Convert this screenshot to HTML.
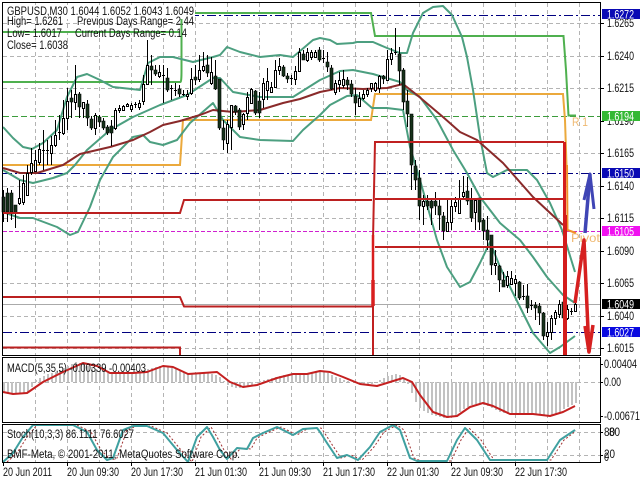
<!DOCTYPE html>
<html><head><meta charset="utf-8"><style>
html,body{margin:0;padding:0;background:#fff;width:640px;height:480px;overflow:hidden}
svg{display:block}
text{font-family:"Liberation Sans",sans-serif;font-size:11.5px;fill:#111}
.g{fill:none;stroke:#b4b4b4;stroke-width:1;stroke-dasharray:4 3}
.t{fill:none;stroke:#4c9f80;stroke-width:2;stroke-linejoin:round}
.r{fill:none;stroke:#bb2020;stroke-width:2}
.w{fill:#fff;font-size:11.5px}
</style></head><body>
<svg width="640" height="480" viewBox="0 0 640 480" xmlns="http://www.w3.org/2000/svg">
<rect width="640" height="480" fill="#fff"/>
<!-- grid -->
<path class="g" d="M35.5 3V355M67.5 3V355M99.5 3V355M131.5 3V355M163.5 3V355M195.5 3V355M227.5 3V355M259.5 3V355M291.5 3V355M323.5 3V355M355.5 3V355M387.5 3V355M419.5 3V355M451.5 3V355M483.5 3V355M515.5 3V355M547.5 3V355M579.5 3V355"/>
<path class="g" d="M3 23.5H600M3 56.5H600M3 88.5H600M3 153.5H600M3 186.5H600M3 218.5H600M3 251.5H600M3 283.5H600M3 316.5H600M3 348.5H600"/>
<path class="g" d="M35.5 358V422M67.5 358V422M99.5 358V422M131.5 358V422M163.5 358V422M195.5 358V422M227.5 358V422M259.5 358V422M291.5 358V422M323.5 358V422M355.5 358V422M387.5 358V422M419.5 358V422M451.5 358V422M483.5 358V422M515.5 358V422M547.5 358V422M579.5 358V422M3 382.5H600"/>
<path class="g" d="M35.5 425V462M67.5 425V462M99.5 425V462M131.5 425V462M163.5 425V462M195.5 425V462M227.5 425V462M259.5 425V462M291.5 425V462M323.5 425V462M355.5 425V462M387.5 425V462M419.5 425V462M451.5 425V462M483.5 425V462M515.5 425V462M547.5 425V462M579.5 425V462M3 432.5H600M3 455.5H600"/>
<!-- horizontal levels -->
<path d="M3 304.5H600" stroke="#aaa" fill="none"/>
<path d="M3 116.5H600" stroke="#3c9c3c" stroke-dasharray="6 3" fill="none"/>
<path d="M3 15.500H600M3 173.500H600M3 332.500H600" stroke="#000080" stroke-dasharray="9 3 2 3" fill="none"/>
<path d="M3 231.5H600" stroke="#d020d0" stroke-dasharray="4 2" fill="none"/>
<!-- MACD histogram -->
<path fill="none" stroke="#c2c2c2" stroke-width="2" d="M4 382V393M8 382V393M12 382V393M16 382V394M20 382V394M24 382V393M28 382V392M32 382V387M36 382V380M40 382V378M44 382V376M48 382V374M52 382V373M56 382V372M60 382V370M64 382V368M68 382V366M72 382V364M76 382V362M80 382V363M84 382V364M88 382V366M92 382V367M96 382V369M100 382V371M104 382V372M108 382V373M112 382V373M116 382V373M120 382V373M124 382V373M128 382V372M132 382V372M136 382V372M140 382V371M144 382V370M148 382V369M152 382V368M156 382V367M160 382V366M164 382V366M168 382V367M172 382V368M176 382V369M180 382V371M184 382V372M188 382V373M192 382V374M196 382V374M200 382V374M204 382V373M208 382V373M212 382V374M216 382V375M220 382V377M224 382V381M228 382V385M232 382V387M236 382V388M240 382V388M244 382V387M248 382V386M252 382V385M256 382V383M260 382V381M264 382V380M268 382V379M272 382V378M276 382V377M280 382V376M284 382V375M288 382V375M292 382V375M296 382V374M300 382V374M304 382V374M308 382V374M312 382V373M316 382V372M320 382V372M324 382V372M328 382V373M332 382V375M336 382V377M340 382V378M344 382V380M348 382V381M352 382V382M356 382V383M360 382V384M364 382V384M368 382V385M372 382V384M376 382V382M380 382V380M384 382V378M388 382V376M392 382V375M396 382V374M400 382V375M404 382V378M408 382V384M412 382V393M416 382V402M420 382V408M424 382V411M428 382V413M432 382V415M436 382V416M440 382V417M444 382V418M448 382V418M452 382V417M456 382V417M460 382V412M464 382V409M468 382V407M472 382V405M476 382V404M480 382V404M484 382V405M488 382V406M492 382V408M496 382V410M500 382V412M504 382V413M508 382V414M512 382V415M516 382V415M520 382V415M524 382V415M528 382V415M532 382V415M536 382V415M540 382V415M544 382V415M548 382V415M552 382V415M556 382V414M560 382V412M564 382V409M568 382V407M572 382V405M576 382V403"/>
<!-- pivot steps green -->
<path fill="none" stroke="#4fb04f" stroke-width="2" d="M3 82H180.500Q181.500 82 181.500 70V13H371L375 36H563.500L566 70L568.500 115.500H576"/>
<path fill="none" stroke="#4fb04f" stroke-width="2" d="M3 32H180"/>
<!-- orange -->
<path fill="none" stroke="#eba93c" stroke-width="2" d="M3 165H180L183 120H371L375 94H563L565 120L566.500 165"/>
<path fill="none" stroke="#f09028" stroke-width="2" d="M567 165L567.500 230L576 233"/>
<!-- bollinger -->
<path class="t" d="M3 127L13 138L23 147L32 149L43 143L57 130L67 97L77 77L87 74L100 80L113 87L140 90L143 80L148 63L160 57L173 57L193 62L213 57L220 55L227 47L240 52L260 57L280 55L293 57L313 40L320 38L330 40L337 44L353 43L357 42L373 42L387 48L400 53L407 53L413 33L423 13L433 7L443 6L452 15L462 37L467 57L473 90L480 137L487 173L493 177L507 170L527 170L537 180L550 203L562 230L575 272"/>
<path class="t" d="M3 170L20 180L33 183L53 178L67 173L75 165L87 150L110 130L133 117L160 105L187 95L213 78L220 78L233 92L260 97L293 97L320 80L340 71L353 70L373 74L390 79L400 82L407 90L420 97L437 120L453 150L467 173L480 197L500 223L520 240L533 257L547 277L563 295L575 303"/>
<path class="t" d="M3 212L20 218L33 218L57 227L70 235L78 232L90 207L100 180L113 157L133 137L143 135L150 142L163 145L177 140L190 123L213 103L223 120L240 137L260 140L293 141L303 130L320 115L330 105L347 96L357 95L372 108L387 108L403 110L410 147L420 180L437 240L447 267L460 287L470 282L480 263L490 242L500 267L520 307L533 333L550 353L560 347L575 336"/>
<!-- brown MA -->
<path fill="none" stroke="#8a2a2a" stroke-width="2" stroke-linejoin="round" d="M3 168L20 173L37 173L63 165L80 154L110 147L133 140L150 132L163 125L180 121L200 115L213 110L233 112L260 110L283 103L300 99L320 92L340 88L363 89L387 88L403 84L417 95L443 117L460 132L477 140L503 163L533 197L563 225"/>
<!-- label background -->
<rect x="3" y="5" width="192" height="14" fill="#fff"/>
<!-- text in pane -->
<text x="7" y="15" textLength="187" lengthAdjust="spacingAndGlyphs">GBPUSD,M30  1.6044 1.6052 1.6043 1.6049</text>
<text x="7" y="25" textLength="56" lengthAdjust="spacingAndGlyphs">High= 1.6261</text>
<text x="77" y="25" textLength="117" lengthAdjust="spacingAndGlyphs">Previous Days Range= 2.44</text>
<text x="7" y="37" textLength="55" lengthAdjust="spacingAndGlyphs">Low= 1.6017</text>
<text x="75" y="37" textLength="112" lengthAdjust="spacingAndGlyphs">Current Days Range= 0.14</text>
<text x="7" y="49" textLength="61" lengthAdjust="spacingAndGlyphs">Close= 1.6038</text>
<!-- candles wicks -->
<path fill="none" stroke="#000" stroke-width="1" d="M3.5 190V222M7.5 188V222M11.5 190V220M15.5 205V228M19.5 180V205M23.5 175V205M27.5 165V195M31.5 148V175M35.5 150V168M39.5 143V165M43.5 130V170M47.5 140V165M51.5 136V165M55.5 120V147M59.5 115V140M63.5 100V135M67.5 88V130M71.5 90V118M75.5 65V110M79.5 92V118M83.5 102V118M87.5 100V126M91.5 116V130M95.5 113V135M99.5 115V127M103.5 118V130M107.5 125V135M111.5 120V146M115.5 108V130M119.5 105V113M123.5 105V111M127.5 103V107M131.5 103V112M135.5 102V108M139.5 100V110M143.5 75V105M147.5 40V85M151.5 55V85M155.5 65V76M159.5 65V78M163.5 65V103M167.5 68V92M171.5 85V100M175.5 83V96M179.5 85V97M183.5 90V96M187.5 90V100M191.5 68V95M195.5 65V85M199.5 55V82M203.5 52V72M207.5 55V77M211.5 57V85M215.5 60V90M219.5 79V130M223.5 120V150M227.5 120V153M231.5 105V150M235.5 105V115M239.5 108V130M243.5 113V130M247.5 92V120M251.5 88V103M255.5 90V115M259.5 92V118M263.5 78V108M267.5 68V100M271.5 82V92M275.5 60V88M279.5 58V75M283.5 65V77M287.5 73V83M291.5 75V85M295.5 66V85M299.5 48V72M303.5 50V60M307.5 48V62M311.5 50V60M315.5 50V58M319.5 47V62M323.5 50V63M327.5 52V72M331.5 65V90M335.5 80V95M339.5 72V92M343.5 70V88M347.5 77V90M351.5 80V97M355.5 88V115M359.5 92V107M363.5 90V100M367.5 88V97M371.5 83V92M375.5 82V92M379.5 75V93M383.5 75V84M387.5 50V80M391.5 48V65M395.5 28V55M399.5 47V85M403.5 68V110M407.5 90V127M411.5 114V190M415.5 160V190M419.5 170V220M423.5 195V225M427.5 195V210M431.5 200V225M435.5 192V215M439.5 200V230M443.5 212V240M447.5 200V232M451.5 198V230M455.5 197V212M459.5 180V213M463.5 176V200M467.5 177V205M471.5 188V222M475.5 200V230M479.5 198V230M483.5 218V240M487.5 216V250M491.5 235V275M495.5 250V275M499.5 265V292M503.5 272V285M507.5 271V288M511.5 271V285M515.5 275V296M519.5 281V300M523.5 285V300M527.5 284V313M531.5 300V310M535.5 302V320M539.5 303V325M543.5 312V340M547.5 322V346M551.5 315V340M555.5 310V325M559.5 300V318M563.5 300V318M567.5 305V320M571.5 308V315M575.5 302V312"/>
<!-- doji -->
<path fill="none" stroke="#000" stroke-width="1" d="M42 150.5h3M46 150.5h3M58 132.5h3M134 104.5h3M162 75.5h3M170 88.5h3M174 90.5h3M182 94.5h3M290 78.5h3M322 58.5h3M394 52.5h3M522 296.5h3M530 305.5h3M570 311.5h3"/>
<!-- black bodies -->
<path fill="#16321a" stroke="#000" stroke-width="0.6" d="M2 197h3v15h-3zM6 193h3v19h-3zM10 193h3v19h-3zM14 205h3v8h-3zM70 98h3v4h-3zM78 94h3v13h-3zM86 104h3v14h-3zM90 119h3v9h-3zM98 117h3v5h-3zM102 121h3v7h-3zM106 127h3v6h-3zM110 126h3v7h-3zM150 66h3v4h-3zM154 70h3v4h-3zM166 78h3v12h-3zM178 89h3v5h-3zM194 77h3v3h-3zM206 65h3v8h-3zM214 76h3v13h-3zM218 79h3v49h-3zM222 128h3v12h-3zM234 106h3v6h-3zM238 110h3v17h-3zM254 91h3v22h-3zM258 101h3v12h-3zM282 67h3v9h-3zM286 76h3v3h-3zM302 54h3v6h-3zM318 50h3v10h-3zM326 62h3v5h-3zM330 68h3v21h-3zM346 80h3v5h-3zM350 84h3v10h-3zM354 96h3v7h-3zM382 76h3v3h-3zM398 54h3v17h-3zM402 70h3v32h-3zM406 101h3v13h-3zM410 114h3v51h-3zM414 166h3v14h-3zM418 178h3v28h-3zM426 201h3v5h-3zM430 201h3v7h-3zM434 201h3v5h-3zM438 206h3v9h-3zM442 216h3v15h-3zM466 191h3v10h-3zM470 200h3v18h-3zM478 198h3v24h-3zM482 220h3v11h-3zM486 230h3v10h-3zM490 235h3v30h-3zM498 266h3v14h-3zM502 280h3v7h-3zM518 282h3v16h-3zM526 296h3v12h-3zM534 305h3v3h-3zM538 306h3v7h-3zM542 313h3v23h-3zM562 302h3v16h-3z"/>
<!-- white bodies -->
<path fill="#fff" stroke="#000" stroke-width="1" d="M18.5 198.500h2v5h-2zM22.5 183.500h2v19h-2zM26.500 173.500h2v22h-2zM30.500 163.500h2v9h-2zM34.500 160.500h2v11h-2zM38.500 149.500h2v13h-2zM50.500 145.500h2v8h-2zM54.500 135.500h2v10h-2zM62.500 118.500h2v15h-2zM66.500 101.500h2v17h-2zM74.500 94.500h2v8h-2zM82.500 102.500h2v6h-2zM94.500 115.500h2v13h-2zM114.500 110.500h2v18h-2zM118.500 108.500h2v2h-2zM122.500 106.500h2v4h-2zM126.500 104.500h2v2h-2zM130.500 105.500h2v4h-2zM138.500 103.500h2v4h-2zM142.500 84.500h2v17h-2zM146.500 65.500h2v19h-2zM158.500 72.500h2v4h-2zM186.500 94.500h2v2h-2zM190.500 79.500h2v14h-2zM198.500 70.500h2v9h-2zM202.500 66.500h2v4h-2zM210.500 72.500h2v11h-2zM226.500 124.500h2v19h-2zM230.500 105.500h2v22h-2zM242.500 114.500h2v10h-2zM246.500 97.500h2v16h-2zM250.500 89.500h2v14h-2zM262.500 83.500h2v16h-2zM266.500 81.500h2v9h-2zM270.500 87.500h2v5h-2zM274.500 70.500h2v17h-2zM278.500 66.500h2v4h-2zM294.500 71.500h2v8h-2zM298.500 52.500h2v19h-2zM306.500 52.500h2v8h-2zM310.500 52.500h2v5h-2zM314.500 52.500h2v5h-2zM334.500 83.500h2v9h-2zM338.500 80.500h2v4h-2zM342.500 79.500h2v6h-2zM358.500 98.500h2v8h-2zM362.500 94.500h2v4h-2zM366.500 90.500h2v4h-2zM370.500 83.500h2v5h-2zM374.500 83.500h2v7h-2zM378.500 76.500h2v12h-2zM386.500 59.500h2v21h-2zM390.500 53.500h2v6h-2zM422.500 201.500h2v5h-2zM446.500 222.500h2v9h-2zM450.500 206.500h2v16h-2zM454.500 202.500h2v4h-2zM458.500 198.500h2v15h-2zM462.500 192.500h2v4h-2zM474.500 200.500h2v12h-2zM494.500 263.500h2v2h-2zM506.500 276.500h2v9h-2zM510.500 278.500h2v6h-2zM514.500 279.500h2v4h-2zM546.500 332.500h2v4h-2zM550.500 318.500h2v14h-2zM554.500 312.500h2v6h-2zM558.500 304.500h2v10h-2zM566.500 309.500h2v9h-2zM574.500 304.500h2v7h-2z"/>
<!-- red levels -->
<path class="r" d="M3 213H180L184 200H372"/>
<path class="r" stroke-linejoin="round" d="M3 297H180L184 306.500H373"/>
<path class="r" d="M3 347.500H180V355"/>
<path fill="none" stroke="#c02020" stroke-width="2" d="M373 355V240L375 142H564M375 199H564M375 247H564"/>
<path fill="none" stroke="#d81e1e" stroke-width="3.5" d="M373 280V306"/>
<path fill="none" stroke="#d81e1e" stroke-width="2.5" d="M373 235V280"/>
<path fill="none" stroke="#d41c1c" stroke-width="3" d="M564.500 142V215"/>
<path fill="none" stroke="#d41c1c" stroke-width="4" d="M565 215V355"/>
<!-- R1 / Pivot labels -->
<text x="572" y="126" style="fill:#efb870" textLength="16" lengthAdjust="spacingAndGlyphs">R 1</text>
<text x="571" y="242" style="fill:#efb870" textLength="29" lengthAdjust="spacingAndGlyphs">Pivot</text>
<!-- arrows -->
<path fill="none" stroke="#d62020" stroke-width="3.5" stroke-linejoin="round" d="M575 303L584 240L589 352"/>
<path fill="none" stroke="#d62020" stroke-width="3.5" stroke-linejoin="round" d="M585 326L589 352L593 325"/>
<path fill="none" stroke="#3f45b5" stroke-width="3.5" stroke-linejoin="round" d="M585 233L590 174"/>
<path fill="none" stroke="#3f45b5" stroke-width="3" stroke-linejoin="round" d="M584 200L590 174L594 209"/>
<!-- MACD line -->
<path fill="none" stroke="#c42020" stroke-width="2" stroke-linejoin="round" d="M3 392L13 394L27 393L43 382L63 372L83 363L97 366L110 373L133 373L147 372L163 366L173 367L188 374L203 373L217 372L230 382L243 387L257 385L277 378L293 374L307 374L320 371L330 372L343 377L360 384L377 386L390 382L403 378L412 382L420 395L433 412L447 417L457 416L470 407L483 403L493 406L510 414L533 414L550 416L563 412L575 406"/>
<!-- Stoch -->
<path transform="translate(4,0)" fill="none" stroke="#a03030" stroke-width="1" stroke-dasharray="2 2" d="M3 462L13 453L23 437L33 425L53 425L73 425L87 432L97 450L107 460L113 458L123 430L133 426L147 426L163 433L177 450L188 462L197 437L207 427L213 437L220 450L227 459L237 448L247 449L253 438L263 433L277 427L293 435L303 429L317 428L320 432L327 443L337 458L347 455L358 460L370 447L380 432L393 425L400 430L410 458L417 461L447 461L457 440L465 428L477 440L490 460L507 460L547 460L560 440L572 431"/>
<path fill="none" stroke="#3fa0a0" stroke-width="2" stroke-linejoin="round" d="M3 462L13 453L23 437L33 425L53 425L73 425L87 432L97 450L107 460L113 458L123 430L133 426L147 426L163 433L177 450L188 462L197 437L207 427L213 437L220 450L227 459L237 448L247 449L253 438L263 433L277 427L293 435L303 429L317 428L320 432L327 443L337 458L347 455L358 460L370 447L380 432L393 425L400 430L410 458L417 461L447 461L457 440L465 428L477 440L490 460L507 460L547 460L560 440L575 430"/>
<!-- pane texts -->
<text x="7" y="372" textLength="139" lengthAdjust="spacingAndGlyphs">MACD(5,35,5) -0.00339 -0.00403</text>
<text x="7" y="438" textLength="127" lengthAdjust="spacingAndGlyphs">Stoch(10,3,3) 86.1111 76.6027</text>
<text x="7" y="458" textLength="233" lengthAdjust="spacingAndGlyphs">BMF-Meta, © 2001-2011, MetaQuotes Software Corp.</text>
<!-- frames -->
<rect x="602" y="0" width="38" height="480" fill="#fff"/>
<rect x="0" y="463" width="640" height="17" fill="#fff"/>
<path fill="none" stroke="#000" d="M2.500 2.500H600.500V355.500H2.500ZM2.500 357.500H600.500V422.500H2.500ZM2.500 424.500H600.500V462.500H2.500Z"/>
<path stroke="#000" fill="none" d="M600 23.500h4M600 56.500h4M600 88.500h4M600 121.500h4M600 153.500h4M600 186.500h4M600 218.500h4M600 251.500h4M600 283.500h4M600 316.500h4M600 348.500h4M600 364.500h3M600 382.500h3M600 416.500h3M600 432.500h3M600 455.500h3M3.500 462v4M67.500 462v4M131.500 462v4M195.500 462v4M259.500 462v4M323.500 462v4M387.500 462v4M451.500 462v4M515.500 462v4"/>
<!-- price axis -->
<g>
<text x="607" y="27" textLength="27" lengthAdjust="spacingAndGlyphs">1.6265</text>
<text x="607" y="60" textLength="27" lengthAdjust="spacingAndGlyphs">1.6240</text>
<text x="607" y="92" textLength="27" lengthAdjust="spacingAndGlyphs">1.6215</text>
<text x="607" y="125" textLength="27" lengthAdjust="spacingAndGlyphs">1.6190</text>
<text x="607" y="157" textLength="27" lengthAdjust="spacingAndGlyphs">1.6165</text>
<text x="607" y="190" textLength="27" lengthAdjust="spacingAndGlyphs">1.6140</text>
<text x="607" y="222" textLength="27" lengthAdjust="spacingAndGlyphs">1.6115</text>
<text x="607" y="255" textLength="27" lengthAdjust="spacingAndGlyphs">1.6090</text>
<text x="607" y="287" textLength="27" lengthAdjust="spacingAndGlyphs">1.6065</text>
<text x="607" y="320" textLength="27" lengthAdjust="spacingAndGlyphs">1.6040</text>
<text x="607" y="352" textLength="27" lengthAdjust="spacingAndGlyphs">1.6015</text>
<text x="604" y="368" textLength="33" lengthAdjust="spacingAndGlyphs">0.00404</text>
<text x="604" y="386" textLength="17" lengthAdjust="spacingAndGlyphs">0.00</text>
<text x="604" y="420" textLength="36" lengthAdjust="spacingAndGlyphs">-0.00671</text>
<text x="604" y="436" textLength="11" lengthAdjust="spacingAndGlyphs">80</text>
<text x="609" y="436" textLength="11" lengthAdjust="spacingAndGlyphs">80</text>
<text x="604" y="458" textLength="11" lengthAdjust="spacingAndGlyphs">20</text>
<text x="604" y="461" textLength="5" lengthAdjust="spacingAndGlyphs">0</text>
</g>
<!-- price tags -->
<rect x="602" y="9" width="38" height="10" fill="#0a0ab4"/>
<text class="w" x="607" y="18.500" textLength="27" lengthAdjust="spacingAndGlyphs">1.6272</text>
<rect x="602" y="111" width="38" height="10" fill="#33b833"/>
<text class="w" x="607" y="120.500" textLength="27" lengthAdjust="spacingAndGlyphs">1.6194</text>
<rect x="602" y="168" width="38" height="10" fill="#0a0ab4"/>
<text class="w" x="607" y="177.500" textLength="27" lengthAdjust="spacingAndGlyphs">1.6150</text>
<rect x="602" y="226" width="38" height="10" fill="#f010f0"/>
<text class="w" x="607" y="235.500" textLength="27" lengthAdjust="spacingAndGlyphs">1.6105</text>
<rect x="602" y="299" width="38" height="10" fill="#000"/>
<text class="w" x="607" y="308.500" textLength="27" lengthAdjust="spacingAndGlyphs">1.6049</text>
<rect x="602" y="327" width="38" height="10" fill="#0a0ae0"/>
<text class="w" x="607" y="336.500" textLength="27" lengthAdjust="spacingAndGlyphs">1.6027</text>
<!-- time axis -->
<text x="3" y="476" textLength="49" lengthAdjust="spacingAndGlyphs">20 Jun 2011</text>
<text x="67" y="476" textLength="52" lengthAdjust="spacingAndGlyphs">20 Jun 09:30</text>
<text x="131" y="476" textLength="52" lengthAdjust="spacingAndGlyphs">20 Jun 17:30</text>
<text x="195" y="476" textLength="52" lengthAdjust="spacingAndGlyphs">21 Jun 01:30</text>
<text x="259" y="476" textLength="52" lengthAdjust="spacingAndGlyphs">21 Jun 09:30</text>
<text x="323" y="476" textLength="52" lengthAdjust="spacingAndGlyphs">21 Jun 17:30</text>
<text x="387" y="476" textLength="52" lengthAdjust="spacingAndGlyphs">22 Jun 01:30</text>
<text x="451" y="476" textLength="52" lengthAdjust="spacingAndGlyphs">22 Jun 09:30</text>
<text x="515" y="476" textLength="52" lengthAdjust="spacingAndGlyphs">22 Jun 17:30</text>
</svg>
</body></html>
